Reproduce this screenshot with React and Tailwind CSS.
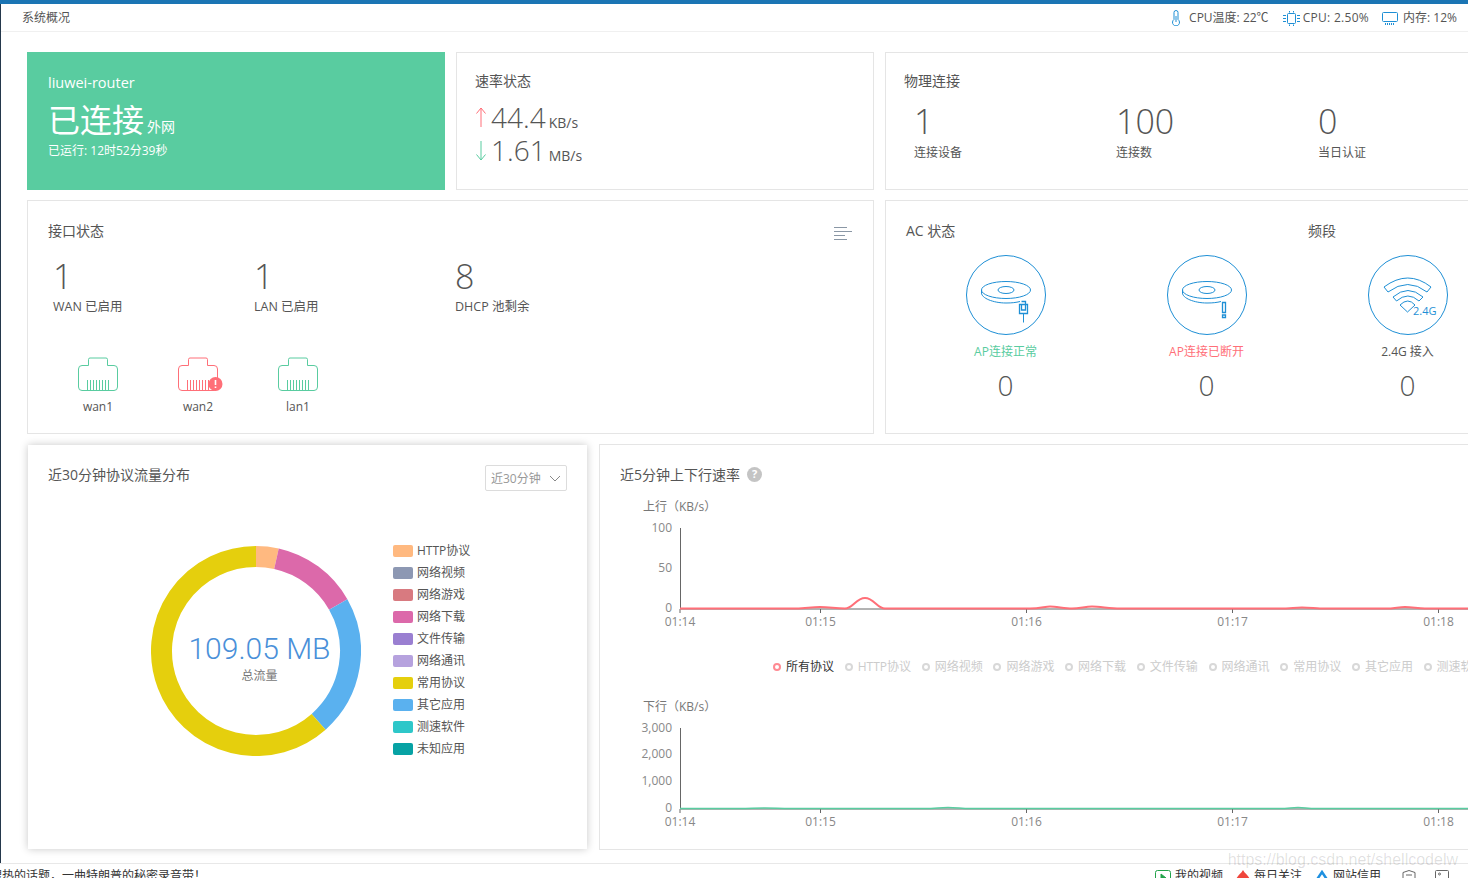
import React from "react";

const BLUE = "#1e8fd5";
const GREEN = "#59cca0";
const RED = "#ff6f78";

const legendItems = [
  ["HTTP协议", "bg-[#ffb980]"],
  ["网络视频", "bg-[#8d98b3]"],
  ["网络游戏", "bg-[#d87a80]"],
  ["网络下载", "bg-[#dc69aa]"],
  ["文件传输", "bg-[#9a7fd1]"],
  ["网络通讯", "bg-[#b6a2de]"],
  ["常用协议", "bg-[#e5cf0d]"],
  ["其它应用", "bg-[#5ab1ef]"],
  ["测速软件", "bg-[#2ec7c9]"],
  ["未知应用", "bg-[#07a2a4]"],
];

const chartLegend = ["HTTP协议", "网络视频", "网络游戏", "网络下载", "文件传输", "网络通讯", "常用协议", "其它应用", "测速软件"];

const ticks = [
  [680, "01:14"],
  [820.5, "01:15"],
  [1026.5, "01:16"],
  [1232.5, "01:17"],
  [1438.5, "01:18"],
];

// donut segment as a stroked arc, angles in degrees from 12 o'clock
function arc(from, to, r = 94.5) {
  const pt = (deg) => {
    const rad = (deg * Math.PI) / 180;
    return `${105 + r * Math.sin(rad)} ${105 - r * Math.cos(rad)}`;
  };
  return `M${pt(from)} A${r} ${r} 0 ${to - from > 180 ? 1 : 0} 1 ${pt(to)}`;
}

function EthernetIcon({ color, alert }) {
  return (
    <svg width="46" height="36" viewBox="0 0 46 36" fill="none" stroke={color} className="block ml-[30px]">
      <path d="M10.5 8.5V2.5a1.500 1.500 0 0 1 1.500-1.500H28a1.500 1.500 0 0 1 1.500 1.500V8.500H36a3.500 3.500 0 0 1 3.500 3.500V30a3.500 3.500 0 0 1-3.500 3.500H4A3.500 3.500 0 0 1 .5 30V12A3.500 3.500 0 0 1 4 8.500Z" />
      <path d="M9.500 23V33M12.500 23V33M15.500 23V33M18.500 23V33M21.500 23V33M24.500 23V33M27.500 23V33M30.500 23V33" />
      {alert && (
        <>
          <circle cx="37.500" cy="27" r="7" fill={color} stroke="none" />
          <path d="M37.500 23V28M37.500 29.500V31" stroke="#fff" strokeWidth="1.600" />
        </>
      )}
    </svg>
  );
}

function Disc() {
  return (
    <>
      <ellipse cx="40" cy="35" rx="24.500" ry="8.500" />
      <ellipse cx="40" cy="35" rx="8" ry="3.500" />
      <path d="M15.500 35V38C15.500 43 27 48 40 48C46 48 50 47.500 54 46.500" />
    </>
  );
}

function ApIcon({ kind }) {
  return (
    <svg width="80" height="80" viewBox="0 0 80 80" fill="none" stroke={BLUE} className="block mx-auto">
      <circle cx="40" cy="40" r="39.500" />
      {kind === "ok" && (
        <>
          <Disc />
          <path d="M53.500 49.500H61.500V58.500H53.500ZM55.500 46.500H59.500V49.500M55.500 50V55H59.500V50" strokeWidth="1.300" />
          <path d="M57.500 58.500V67.500" />
        </>
      )}
      {kind === "off" && (
        <>
          <Disc />
          <path d="M55.500 47.500H58.500V57.500H55.500ZM55.500 60H58.500V62.500H55.500Z" strokeWidth="1.300" />
        </>
      )}
      {kind === "wifi" && (
        <>
          <path d="M16 32Q40 14 63 32L59 37Q40 22 20 37Z" />
          <path d="M25 42Q40 29 55 42L51 46Q40 36 28.500 46Z" />
          <path d="M32 50Q40 42 47 50L39.500 57Z" />
          <text x="45" y="60" fontSize="11" fill={BLUE} stroke="none">2.4G</text>
        </>
      )}
    </svg>
  );
}

function LineChart({ title, yLabels, line, color, lineWidth }) {
  return (
    <svg width="848" height="140" viewBox={`620 ${title.y - 12} 848 140`} className="block">
      <text x="643" y={title.y + 4} fontSize="12" fill="#777">{title.text}</text>
      {yLabels.map(([y, label]) => (
        <text key={label} x="672" y={y + 4} fontSize="12" fill="#888" textAnchor="end">{label}</text>
      ))}
      <path d={`M680.500 ${title.y + 21}V${title.y + 102}H1468`} fill="none" stroke="#666" />
      {ticks.map(([x, label]) => (
        <g key={label}>
          <path d={`M${x} ${title.y + 102}v4`} stroke="#666" />
          <text x={x} y={title.y + 119} fontSize="12" fill="#888" textAnchor="middle">{label}</text>
        </g>
      ))}
      <path d={line} fill="none" stroke={color} strokeWidth={lineWidth} />
    </svg>
  );
}

export default function App() {
  return (
    <div className="relative w-[1468px] h-[878px] overflow-hidden bg-white flex flex-col text-[12px] text-[#555] font-['Open_Sans','Noto_Sans_CJK_SC',sans-serif]">
      <div className="h-1 bg-[#1b75b4] shrink-0"></div>

      <div className="flex-1 flex flex-col border-l border-[#24384c] min-h-0">
        {/* header */}
        <div className="h-[28px] shrink-0 border-b border-[#f0f0f0] flex items-center pl-[21px] pr-[11px] pt-px">
          <span>系统概况</span>
          <div className="ml-auto flex items-center">
            <svg width="10" height="16" viewBox="0 0 10 16" fill="none" stroke={BLUE} className="mr-[8px] -mt-px">
              <path d="M3 9.500V2.500a2 2 0 0 1 4 0V9.500a3.500 3.500 0 1 1-4 0Z" />
              <path d="M5 6V12" />
            </svg>
            <span>CPU温度: 22℃</span>
            <svg width="17" height="15" viewBox="0 0 17 15" fill="none" stroke={BLUE} className="ml-[14px] mr-[3px]">
              <rect x="4.500" y="2.500" width="8" height="10" rx="1" />
              <path d="M0 4.500H3M0 7.500H3M0 10.500H3M14 4.500H17M14 7.500H17M14 10.500H17M6.500 0V1.500M10.500 0V1.500M6.500 13.500V15M10.500 13.500V15" />
            </svg>
            <span className="tracking-[0.3px]">CPU: 2.50%</span>
            <svg width="16" height="13" viewBox="0 0 16 13" fill="none" stroke={BLUE} className="ml-[13px] mr-[5px]">
              <rect x="0.500" y="0.500" width="15" height="9" rx="1" />
              <path d="M3.500 11V13M5.500 11V13M7.500 11V13M9.500 11V13M11.500 11V13" />
            </svg>
            <span>内存: 12%</span>
          </div>
        </div>

        <div className="flex-1 pt-5 pl-[26px] min-h-0">
          {/* row 1 */}
          <div className="flex gap-[11px] h-[138px]">
            <div className="w-[418px] shrink-0 bg-[#59cca0] text-white pl-[21px] pt-[21px]">
              <div className="text-[14.500px] leading-[20px]">liuwei-router</div>
              <div className="mt-[7px] h-[40px] flex items-baseline leading-[40px]">
                <span className="text-[32px]">已连接</span>
                <span className="text-[14px] ml-[3px]">外网</span>
              </div>
              <div className="mt-px leading-[20px]">已运行: 12时52分39秒</div>
            </div>

            <div className="w-[418px] shrink-0 border border-[#e5e5e5] pl-[18px] pt-[18px]">
              <div className="text-[14px] leading-[20px]">速率状态</div>
              <div className="mt-[9px] h-[34px] flex items-baseline leading-[34px]">
                <svg width="12" height="20" viewBox="0 0 12 20" fill="none" stroke={RED} className="self-center mr-[4px]">
                  <path d="M6 20V1M1.500 6.500L6 1L10.500 6.500" />
                </svg>
                <span className="text-[28px] font-light">44.4</span>
                <span className="text-[14px] ml-[3px]">KB/s</span>
              </div>
              <div className="h-[33px] flex items-baseline leading-[33px]">
                <svg width="12" height="20" viewBox="0 0 12 20" fill="none" stroke={GREEN} className="self-center mr-[4px]">
                  <path d="M6 0V19M1.500 13.500L6 19L10.500 13.500" />
                </svg>
                <span className="text-[28px] font-light">1.61</span>
                <span className="text-[14px] ml-[3px]">MB/s</span>
              </div>
            </div>

            <div className="w-[600px] shrink-0 border border-[#e5e5e5] pl-[18px] pt-[18px]">
              <div className="text-[14px] leading-[20px]">物理连接</div>
              <div className="mt-[10px] ml-[10px] grid grid-cols-[202px_202px_90px]">
                {[["1", "连接设备"], ["100", "连接数"], ["0", "当日认证"]].map(([num, label]) => (
                  <div key={label}>
                    <div className="text-[34px] font-light leading-[40px]">{num}</div>
                    <div className="mt-[2px] leading-[20px]">{label}</div>
                  </div>
                ))}
              </div>
            </div>
          </div>

          {/* row 2 */}
          <div className="flex gap-[11px] h-[234px] mt-[10px]">
            <div className="w-[847px] shrink-0 border border-[#e5e5e5] pl-5 pt-5">
              <div className="flex items-center pr-[21px]">
                <span className="text-[14px] leading-[20px]">接口状态</span>
                <svg width="18" height="13" viewBox="0 0 18 13" fill="none" stroke="#8a97a5" className="ml-auto mt-1">
                  <path d="M0 .5H13M0 4.500H18M0 8.500H11M0 12.500H13" />
                </svg>
              </div>
              <div className="mt-[15px] ml-[5px] grid grid-cols-[201px_201px_201px]">
                {[["1", "WAN 已启用"], ["1", "LAN 已启用"], ["8", "DHCP 池剩余"]].map(([num, label]) => (
                  <div key={label}>
                    <div className="text-[34px] font-light leading-[40px]">{num}</div>
                    <div className="mt-px text-[12.500px] leading-[20px]">{label}</div>
                  </div>
                ))}
              </div>
              <div className="mt-10 flex">
                {[["wan1", GREEN, false], ["wan2", RED, true], ["lan1", GREEN, false]].map(([name, color, alert]) => (
                  <div key={name} className="w-[100px]">
                    <EthernetIcon color={color} alert={alert} />
                    <div className="mt-1 leading-[20px] text-center">{name}</div>
                  </div>
                ))}
              </div>
            </div>

            <div className="w-[700px] shrink-0 border border-[#e5e5e5] pl-5 pt-5">
              <div className="grid grid-cols-[402px_200px] text-[14px] leading-[20px]">
                <span>AC 状态</span>
                <span>频段</span>
              </div>
              <div className="mt-[14px] -ml-px grid grid-cols-[201px_201px_201px]">
                {[
                  ["ok", "AP连接正常", "text-[#59cca0]"],
                  ["off", "AP连接已断开", "text-[#ff6f78]"],
                  ["wifi", "2.4G 接入", "text-[#555]"],
                ].map(([kind, label, cls]) => (
                  <div key={kind} className="text-center">
                    <ApIcon kind={kind} />
                    <div className={`mt-[7px] leading-[20px] ${cls}`}>{label}</div>
                    <div className="mt-[5px] text-[28px] font-light leading-[36px]">0</div>
                  </div>
                ))}
              </div>
            </div>
          </div>

          {/* row 3 */}
          <div className="flex gap-[11px] h-[406px] mt-[10px]">
            <div className="m-px w-[559px] h-[404px] shrink-0 bg-white shadow-[0_0_8px_rgba(0,0,0,0.22)]">
              <div className="flex items-start pl-5 pr-5 pt-5">
                <span className="text-[14px] leading-[20px]">近30分钟协议流量分布</span>
                <div className="ml-auto w-[82px] h-[26px] border border-[#dcdcdc] rounded-[2px] flex items-center pl-[5px] pr-[5px] pt-px text-[#999]">
                  <span>近30分钟</span>
                  <svg width="12" height="7" viewBox="0 0 12 7" fill="none" stroke="#888" className="ml-auto">
                    <path d="M1 1L6 6L11 1" />
                  </svg>
                </div>
              </div>

              <div className="mt-[49px] ml-[123px] flex items-start">
                <div className="relative mt-1.5 w-[210px] h-[210px]">
                  <svg width="210" height="210" viewBox="0 0 210 210" fill="none" strokeWidth="21">
                    <path d={arc(0, 12.5)} stroke="#ffb980" />
                    <path d={arc(12.5, 60.5)} stroke="#dc69aa" />
                    <path d={arc(60.5, 138.5)} stroke="#5ab1ef" />
                    <path d={arc(138.5, 360)} stroke="#e5cf0d" />
                  </svg>
                  <div className="absolute inset-0 pl-[7px] pt-[85px] flex flex-col items-center">
                    <span className="text-[30px] leading-[36px] text-[#4a90d9] font-light font-['Roboto',sans-serif]">109.05 MB</span>
                    <span className="mt-px leading-[16px] text-[#777]">总流量</span>
                  </div>
                </div>
                <div className="ml-[32px]">
                  {legendItems.map(([name, cls]) => (
                    <div key={name} className="h-[22px] flex items-center">
                      <span className={`w-5 h-3 rounded-[2px] mr-1 ${cls}`}></span>
                      <span>{name}</span>
                    </div>
                  ))}
                </div>
              </div>
            </div>

            <div className="w-[900px] shrink-0 border border-[#e5e5e5] pl-5 pt-[19px]">
              <div className="flex items-center h-5">
                <span className="text-[14px]">近5分钟上下行速率</span>
                <span className="ml-[7px] w-[15px] h-[15px] rounded-full bg-[#c4c4c4] text-white text-[11px] font-bold flex items-center justify-center">?</span>
              </div>
              <div className="mt-[11px]">
                <LineChart
                  title={{ text: "上行（KB/s）", y: 507 }}
                  yLabels={[[528, "100"], [568, "50"], [608, "0"]]}
                  color="#ff6f78"
                  lineWidth="2"
                  line="M680 608.500H790C805 608.500 810 607 820 607C830 607 835 608.500 845 608.500C853 608.500 856 598 865 598C874 598 877 608.500 885 608.500H1030C1040 608.500 1045 606.500 1050 606.500C1056 606.500 1065 608.500 1072 608.500C1080 608.500 1085 606.500 1092 606.500C1100 606.500 1110 608.500 1120 608.500H1280C1290 608.500 1295 607.500 1302 607.500C1310 607.500 1315 608.500 1320 608.500H1385C1395 608.500 1398 607 1405 607C1412 607 1418 608.500 1425 608.500H1468"
                />
              </div>
              <div className="mt-[22px] h-5 ml-[153px] flex items-center gap-[10.7px] whitespace-nowrap text-[#ccc]">
                <div className="flex items-center text-[#333]">
                  <span className="w-2 h-2 rounded-full border-2 border-[#ff8a92] mr-[5px]"></span>
                  <span>所有协议</span>
                </div>
                {chartLegend.map((name) => (
                  <div key={name} className="flex items-center">
                    <span className="w-2 h-2 rounded-full border-2 border-[#d8d8d8] mr-[5px]"></span>
                    <span>{name}</span>
                  </div>
                ))}
              </div>
              <div className="mt-[18px]">
                <LineChart
                  title={{ text: "下行（KB/s）", y: 707 }}
                  yLabels={[[728, "3,000"], [754, "2,000"], [781, "1,000"], [808, "0"]]}
                  color="#59cca0"
                  lineWidth="1.500"
                  line="M680 808.500H740C750 808.500 755 808 765 808C775 808 780 808.500 790 808.500H925C935 808.500 940 807.500 948 807.500C956 807.500 962 808.500 970 808.500H1280C1288 808.500 1292 807.500 1298 807.500C1304 807.500 1308 808.500 1316 808.500H1468"
                />
              </div>
            </div>
          </div>
        </div>
      </div>

      {/* browser status strip, cut off by the window */}
      <div className="h-[15px] shrink-0 border-t border-[#e8e8e8] flex items-start pt-[4px] overflow-hidden text-[#333] leading-[16px] pr-[19px]">
        <span className="-ml-[10px]">搜热的话题，一曲特朗普的秘密录音带！</span>
        <div className="ml-auto flex items-start">
          <svg width="16" height="16" viewBox="0 0 16 16" fill="none" stroke="#22a34a" className="mt-[2px] mr-1">
            <rect x=".5" y=".5" width="15" height="15" rx="2" />
            <path d="M6 4L11 8L6 12Z" fill="#22a34a" />
          </svg>
          <span>我的视频</span>
          <svg width="14" height="16" viewBox="0 0 14 16" className="ml-[13px] mt-[2px] mr-1">
            <path d="M7 0C9 4 14 6 14 11C14 14 11 16 7 16C3 16 0 14 0 11C0 6 5 4 7 0Z" fill="#f0463c" />
          </svg>
          <span>每日关注</span>
          <svg width="14" height="16" viewBox="0 0 14 16" fill="none" stroke="#1e90e0" strokeWidth="2.500" className="ml-[13px] mt-[2px] mr-1">
            <path d="M1 11L7 2L13 11" />
          </svg>
          <span>网站信用</span>
          <svg width="14" height="16" viewBox="0 0 14 16" fill="none" stroke="#666" className="ml-[21px] mt-[2px]">
            <path d="M1 2.500L7 .5L13 2.500V10L7 15L1 10Z" />
            <path d="M4 5H10" />
          </svg>
          <svg width="14" height="16" viewBox="0 0 14 16" fill="none" stroke="#666" className="ml-[19px] mt-[2px]">
            <rect x=".5" y=".5" width="13" height="12" rx="1" />
            <circle cx="4.500" cy="4" r="1" />
          </svg>
        </div>
      </div>

      {/* watermark */}
      <div className="absolute right-[10px] top-[850px] text-[16px] leading-[20px] text-[rgba(0,0,0,0.13)] font-['Liberation_Sans',sans-serif]">
        https://blog.csdn.net/shellcodelw
      </div>
    </div>
  );
}
